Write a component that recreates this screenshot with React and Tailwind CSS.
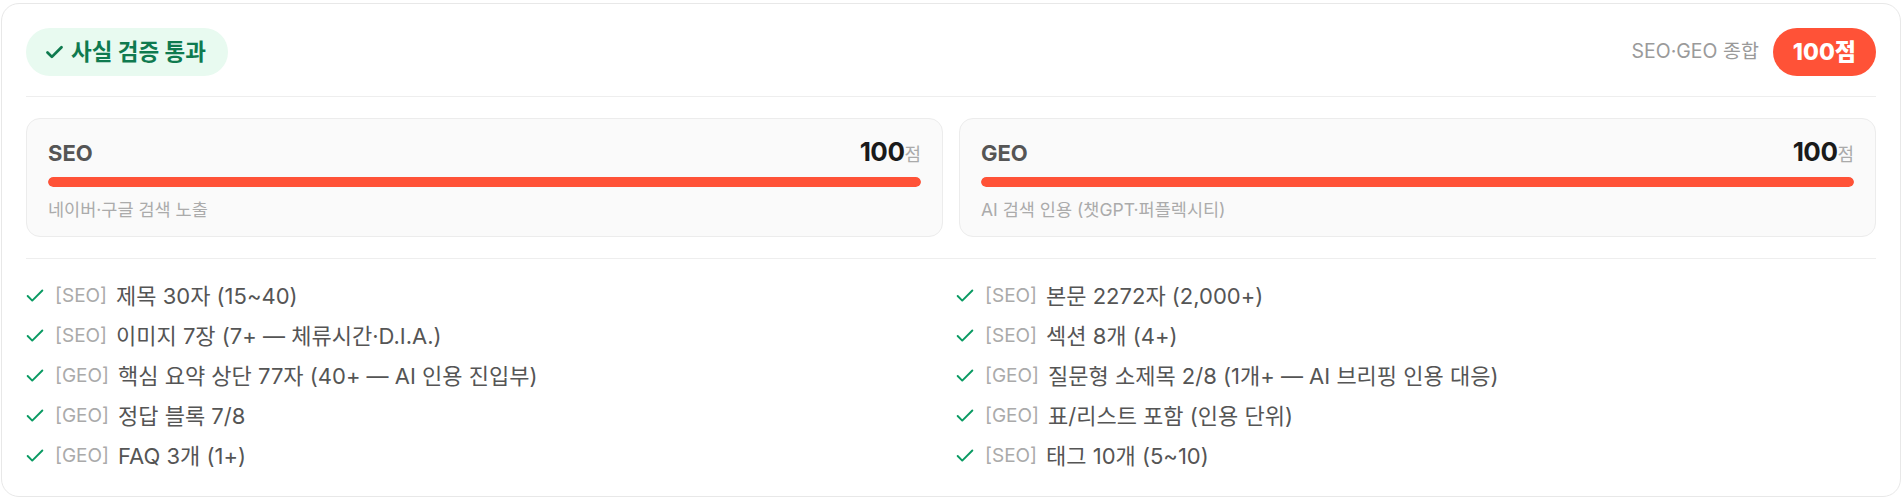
import React from 'react';

const FONT = { fontFamily: 'Inter, "Noto Sans CJK KR", sans-serif' };

const leftChecks = [
  { tag: 'SEO', text: '제목 30자 (15~40)' },
  { tag: 'SEO', text: '이미지 7장 (7+ — 체류시간·D.I.A.)' },
  { tag: 'GEO', text: '핵심 요약 상단 77자 (40+ — AI 인용 진입부)' },
  { tag: 'GEO', text: '정답 블록 7/8' },
  { tag: 'GEO', text: 'FAQ 3개 (1+)' },
];

const rightChecks = [
  { tag: 'SEO', text: '본문 2272자 (2,000+)' },
  { tag: 'SEO', text: '섹션 8개 (4+)' },
  { tag: 'GEO', text: '질문형 소제목 2/8 (1개+ — AI 브리핑 인용 대응)' },
  { tag: 'GEO', text: '표/리스트 포함 (인용 단위)' },
  { tag: 'SEO', text: '태그 10개 (5~10)' },
];

const scores = [
  { label: 'SEO', score: 100, desc: '네이버·구글 검색 노출' },
  { label: 'GEO', score: 100, desc: 'AI 검색 인용 (챗GPT·퍼플렉시티)' },
];

const CheckIcon = ({ className, strokeWidth = 2.5 }) => (
  <svg viewBox="0 0 24 24" fill="none" stroke="currentColor" strokeWidth={strokeWidth} strokeLinecap="round" strokeLinejoin="round" className={className}>
    <polyline points="20 6 9 17 4 12" />
  </svg>
);

const ScoreCard = ({ label, score, desc }) => (
  <div className="rounded-[14px] border border-[#ececec] bg-[#fafafa] px-[21px] pt-[18px] pb-[14px]">
    {/* 라벨 + 점수 */}
    <div className="flex items-baseline justify-between h-[30px]">
      <span className="text-[22px] font-bold text-[#555555] leading-[30px]">{label}</span>
      <span className="leading-[30px]">
        <span className="text-[26px] font-bold text-[#1a1a1a] tracking-[-0.5px]">{score}</span>
        <span className="text-[18px] text-[#aaaaaa]">점</span>
      </span>
    </div>
    <div className="mt-[10px] h-[10px] rounded-full bg-[#ededed] overflow-hidden">
      <div className="h-full rounded-full bg-[#ff5237]" style={{ width: `${score}%` }} />
    </div>
    <div className="mt-[11px] text-[17.5px] leading-[24px] text-[#ababab]">{desc}</div>
  </div>
);

const CheckItem = ({ tag, text }) => (
  <div className="flex items-center h-8">
    <CheckIcon className="w-[22px] h-[22px] -ml-[2px] text-[#0a9a63]" strokeWidth={2.1} />
    <span className="ml-[9px] text-[19px] text-[#aaaaaa]">[{tag}]</span>
    <span className="ml-[9px] text-[22px] text-[#555555]">{text}</span>
  </div>
);

export default function App() {
  return (
    <div className="bg-white pl-px pr-[3px] pt-[3px]" style={FONT}>
      <div className="rounded-[18px] border border-[#e8e8e8] bg-white p-6">
        {/* 헤더 */}
        <div className="flex items-center justify-between pb-5 border-b border-[#eeeeee]">
          <div className="inline-flex items-center gap-[6px] h-12 pl-[18px] pr-[22px] rounded-full bg-[#e8faf0] text-[#0f7a4f]">
            <CheckIcon className="w-[21px] h-[21px]" strokeWidth={3.2} />
            <span className="text-[22.5px] font-bold">사실 검증 통과</span>
          </div>
          <div className="flex items-center gap-[14px]">
            <span className="text-[19.5px] text-[#9a9a9a]">SEO·GEO 종합</span>
            <div className="flex items-center h-12 px-5 rounded-full bg-[#ff5237] text-white text-[23px] font-extrabold">
              100점
            </div>
          </div>
        </div>

        {/* 점수 카드 */}
        <div className="grid grid-cols-2 gap-4 mt-[21px]">
          {scores.map((s) => (
            <ScoreCard key={s.label} {...s} />
          ))}
        </div>

        {/* 체크 리스트 */}
        <div className="mt-[21px] pt-[21px] border-t border-[#eeeeee] grid grid-cols-2 gap-x-[10px]">
          <div className="flex flex-col gap-2">
            {leftChecks.map((c, i) => (
              <CheckItem key={i} {...c} />
            ))}
          </div>
          <div className="flex flex-col gap-2">
            {rightChecks.map((c, i) => (
              <CheckItem key={i} {...c} />
            ))}
          </div>
        </div>
      </div>
    </div>
  );
}
